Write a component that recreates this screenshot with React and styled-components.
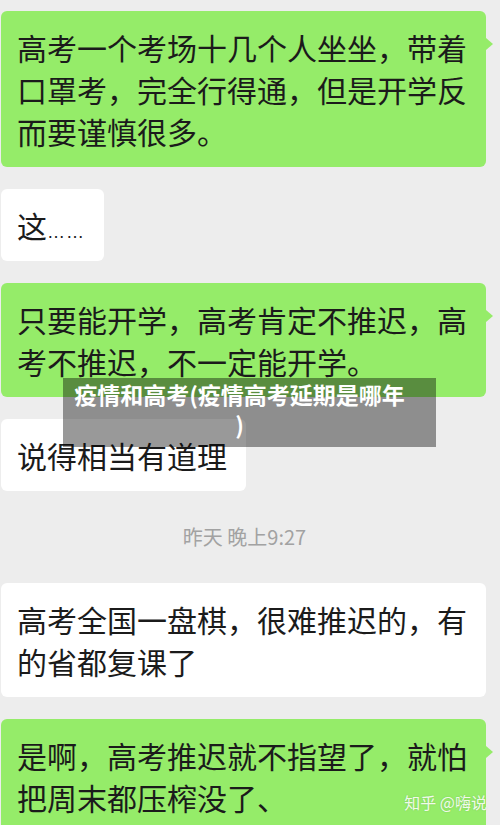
import React from 'react';
import styled, {createGlobalStyle, css} from "styled-components";

const colors = {
    page: '#ededed',
    green: '#95ec69',
    white: '#ffffff',
    text: '#1b1b1b',
    time: '#a2a2a2',
};

const GlobalStyle = createGlobalStyle`
    html, body {
        margin: 0;
        padding: 0;
        background: ${colors.page};
    }
`;

const Screen = styled.div`
    position: relative;
    width: 500px;
    height: 825px;
    overflow: hidden;
    background: ${colors.page};
    font-family: "Noto Sans CJK SC", "Noto Sans", sans-serif;
`;

const MessageList = styled.div`
    display: flex;
    flex-direction: column;
    align-items: flex-start;
    gap: 22px;
    padding: 11px 0 0 1px;
`;

const Bubble = styled.div`
    position: relative;
    padding: 15px 19px 15px 16px;
    border-radius: 6px;
    font-size: 30px;
    line-height: 42px;
    height: ${({rows}) => rows * 42 + 30}px;
    box-sizing: border-box;
    color: ${colors.text};
    white-space: nowrap;
    background: ${({mine}) => mine ? colors.green : colors.white};
    ${({mine}) => mine && css`
        &::after {
            content: "";
            position: absolute;
            right: -7px;
            top: 27px;
            border-top: 6px solid transparent;
            border-bottom: 6px solid transparent;
            border-left: 7px solid ${colors.green};
        }
    `}
`;

const Dots = styled.span`
    font-family: "Liberation Sans", sans-serif;
    font-size: 18px;
    line-height: 1;
    letter-spacing: 1px;
`;

const TimeRow = styled.div`
    align-self: stretch;
    height: 48px;
    line-height: 48px;
    text-align: center;
    font-size: 20px;
    color: ${colors.time};
    padding-right: 12px;
`;

const TitleOverlay = styled.div`
    position: absolute;
    left: 63px;
    top: 378px;
    width: 373px;
    height: 69px;
    box-sizing: border-box;
    padding: 1px 26px 0 6px;
    background: rgba(0, 0, 0, 0.4);
    color: #fff;
    font-size: 23px;
    font-weight: 700;
    line-height: 30px;
    text-align: center;
    white-space: nowrap;
`;

const Watermark = styled.div`
    position: absolute;
    right: 13px;
    bottom: 11px;
    font-size: 16px;
    color: rgba(255, 255, 255, 0.88);
    text-shadow: 0 0 2px rgba(0, 0, 0, 0.15);
`;

const lines = (arr) => arr.map((l, i) => (
    <React.Fragment key={i}>{l}{i < arr.length - 1 && <br/>}</React.Fragment>
));

const App = () => {
    return (
        <Screen>
            <GlobalStyle/>
            <MessageList>
                <Bubble mine rows={3}>
                    {lines(['高考一个考场十几个人坐坐，带着', '口罩考，完全行得通，但是开学反', '而要谨慎很多。'])}
                </Bubble>
                <Bubble rows={1}>这<Dots>……</Dots></Bubble>
                <Bubble mine rows={2}>
                    {lines(['只要能开学，高考肯定不推迟，高', '考不推迟，不一定能开学。'])}
                </Bubble>
                <Bubble rows={1}>说得相当有道理</Bubble>
                <TimeRow>昨天 晚上9:27</TimeRow>
                <Bubble rows={2}>
                    {lines(['高考全国一盘棋，很难推迟的，有', '的省都复课了'])}
                </Bubble>
                <Bubble mine rows={2}>
                    {lines(['是啊，高考推迟就不指望了，就怕', '把周末都压榨没了、'])}
                </Bubble>
            </MessageList>
            <TitleOverlay>
                疫情和高考(疫情高考延期是哪年<br/>)
            </TitleOverlay>
            <Watermark>知乎 @嗨说</Watermark>
        </Screen>
    );
};

export default App;
